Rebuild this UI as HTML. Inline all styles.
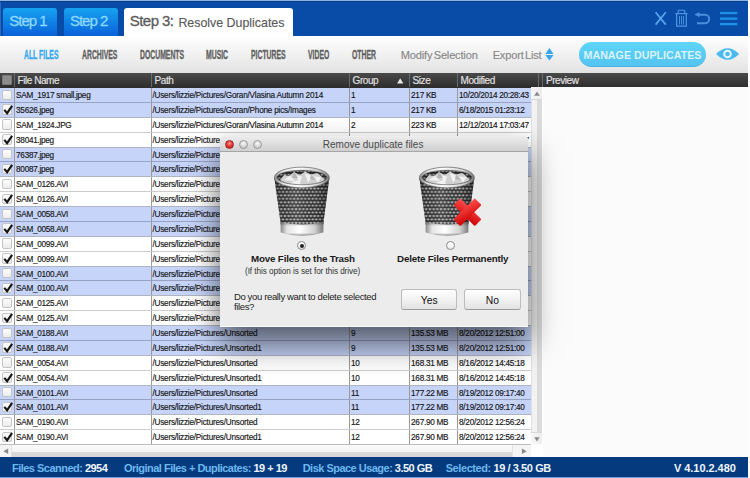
<!DOCTYPE html>
<html><head><meta charset="utf-8">
<style>
*{box-sizing:border-box;margin:0;padding:0}
html,body{width:750px;height:478px;overflow:hidden;background:#fff;font-family:"Liberation Sans",sans-serif;position:relative}
.abs{position:absolute}
#hdr{position:absolute;left:0;top:0;width:748.4px;height:35.6px;background:#084ca8;border-top:1px solid #8ab4e6;box-shadow:inset 1px 0 0 #2a68c0}
#hdr:after{content:"";position:absolute;left:0;right:0;top:0;height:1px;background:#0b3f88}
.tab{position:absolute;top:7px;height:27.6px;border-radius:3px 3px 0 0;background:linear-gradient(#16a2f0,#0a62da);color:#8cd8fe;font-size:15px;letter-spacing:-1.0px;white-space:nowrap}
.tab span{position:absolute;top:3.9px;-webkit-text-stroke:0.3px currentColor}
#tab3{background:#fff;color:#5a5a5a;letter-spacing:-0.55px}
#tbar{position:absolute;left:0;top:35.6px;width:748.4px;height:37.4px;background:linear-gradient(#ffffff,#f4f4f4 40%,#e2e2e2)}
.cat{position:absolute;top:48px;font-size:12px;font-weight:700;color:#606060;-webkit-text-stroke:0.35px currentColor;transform-origin:0 0;transform:scaleX(0.57);white-space:nowrap;line-height:14px}
.lnk{position:absolute;top:47.7px;font-size:11px;color:#878787;-webkit-text-stroke:0.15px #878787;white-space:nowrap;letter-spacing:-0.15px;word-spacing:-1.5px;line-height:14px}
#mng{position:absolute;left:579px;top:42.2px;width:127px;height:24.6px;border-radius:12.5px;background:linear-gradient(#60d4f8,#54c4f0);border-bottom:1px solid #4ab0e0;color:#d9f3fd;font-weight:700;font-size:10.7px;line-height:26px;text-align:center;white-space:nowrap}
#thead{position:absolute;left:0;top:73px;width:748.4px;height:14.3px;background:linear-gradient(#4a4a4a,#2e2e2e)}
.th{position:absolute;top:0;height:14.3px;border-left:1px solid #6a6a6a;color:#e2e2e2;-webkit-text-stroke:0.15px #e2e2e2;font-size:10px;line-height:15px;padding-left:2.6px;letter-spacing:-0.45px;white-space:nowrap}
#rows{position:absolute;left:0;top:0;width:531.7px;height:478px;overflow:hidden}
.r{position:absolute;left:0;width:531.7px;height:14.875px;border-top:1px solid #c6c6c6}
.r.b{background:#c6d4f9}
.r.w{background:#fff}
.c{position:absolute;top:0;height:100%;border-left:1px solid #9a9a9a;font-size:8.2px;line-height:16.4px;color:#151515;-webkit-text-stroke:0.15px #151515;white-space:nowrap;overflow:hidden;padding-left:1.1px;letter-spacing:-0.28px}
.c1{left:14px;width:137px}
.c2{left:151px;width:198px;letter-spacing:-0.21px;padding-left:0.4px}
.c3{left:349px;width:60px}
.c4{left:409px;width:48px}
.c5{left:457px;width:74.3px}
.cb{position:absolute;left:1.6px;top:1.6px;width:10px;height:10.4px;border:1px solid #c4c4c4;border-radius:2px;background:linear-gradient(#fdfdfd,#ececec)}
.ck{position:absolute;left:0;top:-1px}
#vscroll{position:absolute;left:531.7px;top:87.3px;width:11px;height:357px;background:#f0f0f0;border-left:1px solid #dcdcdc}
#hscroll{position:absolute;left:0;top:444.3px;width:531.7px;height:13px;background:linear-gradient(#f6f6f6,#e6e6e6);border-top:1px solid #c8c8c8}
#preview{position:absolute;left:542.5px;top:87.3px;width:206px;height:370px;background:#fbfbfb}
#foot{position:absolute;left:0;top:457.3px;width:748.4px;height:19.7px;background:#053b7e;font-size:11px;font-weight:700;letter-spacing:-0.52px;white-space:nowrap;line-height:20px}
#foot span{position:absolute;top:1px}
.tl{width:9px;height:9px;border-radius:50%;border:0.7px solid #9a9a9a;background:radial-gradient(circle at 50% 35%,#fafafa 0,#d8d8d8 50%,#bcbcbc 100%)}
.rad{width:9px;height:9px;border-radius:50%;border:1px solid #8a8a8a;background:linear-gradient(#fff,#eaeaea)}
.bt{font-size:9.8px;font-weight:700;color:#1a1a1a;white-space:nowrap;line-height:10px;letter-spacing:-0.2px}
.btn{width:56.3px;height:20.2px;border:1px solid #bcbcbc;border-bottom-color:#9c9c9c;border-radius:3px;background:linear-gradient(#ffffff,#f2f2f2 50%,#e2e2e2);font-size:10.3px;color:#111;text-align:center;line-height:22px}
.fl{color:#6cb8ee} .fv{color:#eef4fb}
</style></head><body>
<div id="hdr">
  <div class="tab" style="left:3.3px;width:54px"><span style="left:6px">Step 1</span></div>
  <div class="tab" style="left:63.9px;width:53.8px"><span style="left:6px">Step 2</span></div>
  <div class="tab" id="tab3" style="left:123.9px;width:168.9px"><span style="left:5.9px">Step 3:</span><span style="left:54.5px;font-size:12.4px;top:7.6px;letter-spacing:0px;-webkit-text-stroke:0.15px currentColor">Resolve Duplicates</span></div>
</div>
<div id="tbar"></div>
<div class="cat" style="left:24.3px;color:#36a8ee">ALL FILES</div>
<div class="cat" style="left:81.6px">ARCHIVES</div>
<div class="cat" style="left:139.6px">DOCUMENTS</div>
<div class="cat" style="left:205.9px">MUSIC</div>
<div class="cat" style="left:251.2px">PICTURES</div>
<div class="cat" style="left:308.1px">VIDEO</div>
<div class="cat" style="left:352px">OTHER</div>
<div class="lnk" style="left:400.8px">Modify Selection</div>
<div class="lnk" style="left:492.7px">Export List</div>
<div id="mng">MANAGE DUPLICATES</div>
<div id="thead">
  <div class="th" style="left:0;width:14.5px;border-left:none"><div style="position:absolute;left:1.6px;top:1.7px;width:10.4px;height:9.9px;background:#8c8c8c;border:1px solid #7a7a7a;border-radius:1px"></div></div>
  <div class="th" style="left:14px;width:137px">File Name</div>
  <div class="th" style="left:151px;width:198px">Path</div>
  <div class="th" style="left:349px;width:60px">Group</div>
  <div class="th" style="left:409px;width:48px">Size</div>
  <div class="th" style="left:457px;width:80.6px">Modified</div>
  <div class="th" style="left:537.6px;width:5px"></div>
  <div class="th" style="left:542.4px;width:206px">Preview</div>
</div>
<div id="rows">
<div class="r b" style="top:87.000px;border-top-color:#2e2e2e"><div class="cb"></div><div class="c c1">SAM_1917 small.jpeg</div><div class="c c2">/Users/lizzie/Pictures/Goran/Vlasina Autumn 2014</div><div class="c c3">1</div><div class="c c4">217 KB</div><div class="c c5">10/20/2014 20:28:43</div></div>
<div class="r b" style="top:101.875px;border-top-color:#98a3c4"><div class="cb"></div><svg class="ck" viewBox="0 0 14 15" width="14" height="15"><path d="M4.3 7.9 L7.1 11.2 L12.1 3.8" fill="none" stroke="#151515" stroke-width="2.1" stroke-linejoin="miter" stroke-linecap="butt"/></svg><div class="c c1">35626.jpeg</div><div class="c c2">/Users/lizzie/Pictures/Goran/Phone pics/Images</div><div class="c c3">1</div><div class="c c4">217 KB</div><div class="c c5">6/18/2015 01:23:12</div></div>
<div class="r w" style="top:116.750px;border-top-color:#b0b5c2"><div class="cb"></div><div class="c c1">SAM_1924.JPG</div><div class="c c2">/Users/lizzie/Pictures/Goran/Vlasina Autumn 2014</div><div class="c c3">2</div><div class="c c4">223 KB</div><div class="c c5">12/12/2014 17:03:47</div></div>
<div class="r w" style="top:131.625px;border-top-color:#cdcdcd"><div class="cb"></div><svg class="ck" viewBox="0 0 14 15" width="14" height="15"><path d="M4.3 7.9 L7.1 11.2 L12.1 3.8" fill="none" stroke="#151515" stroke-width="2.1" stroke-linejoin="miter" stroke-linecap="butt"/></svg><div class="c c1">38041.jpeg</div><div class="c c2">/Users/lizzie/Pictures/Goran/Vlasina Autumn 2014</div><div class="c c3">2</div><div class="c c4">223 KB</div><div class="c c5">12/12/2014 17:03:47</div></div>
<div class="r b" style="top:146.500px;border-top-color:#b0b5c2"><div class="cb"></div><div class="c c1">76387.jpeg</div><div class="c c2">/Users/lizzie/Pictures/Goran/Phone pics</div><div class="c c3">3</div><div class="c c4">1.02 MB</div><div class="c c5">6/18/2015 01:23:12</div></div>
<div class="r b" style="top:161.375px;border-top-color:#98a3c4"><div class="cb"></div><svg class="ck" viewBox="0 0 14 15" width="14" height="15"><path d="M4.3 7.9 L7.1 11.2 L12.1 3.8" fill="none" stroke="#151515" stroke-width="2.1" stroke-linejoin="miter" stroke-linecap="butt"/></svg><div class="c c1">80087.jpeg</div><div class="c c2">/Users/lizzie/Pictures/Goran/Phone pics</div><div class="c c3">3</div><div class="c c4">1.02 MB</div><div class="c c5">6/18/2015 01:23:12</div></div>
<div class="r w" style="top:176.250px;border-top-color:#b0b5c2"><div class="cb"></div><div class="c c1">SAM_0126.AVI</div><div class="c c2">/Users/lizzie/Pictures/Unsorted</div><div class="c c3">4</div><div class="c c4">35.10 MB</div><div class="c c5">8/20/2012 12:51:00</div></div>
<div class="r w" style="top:191.125px;border-top-color:#cdcdcd"><div class="cb"></div><svg class="ck" viewBox="0 0 14 15" width="14" height="15"><path d="M4.3 7.9 L7.1 11.2 L12.1 3.8" fill="none" stroke="#151515" stroke-width="2.1" stroke-linejoin="miter" stroke-linecap="butt"/></svg><div class="c c1">SAM_0126.AVI</div><div class="c c2">/Users/lizzie/Pictures/Unsorted1</div><div class="c c3">4</div><div class="c c4">35.10 MB</div><div class="c c5">8/20/2012 12:51:00</div></div>
<div class="r b" style="top:206.000px;border-top-color:#b0b5c2"><div class="cb"></div><div class="c c1">SAM_0058.AVI</div><div class="c c2">/Users/lizzie/Pictures/Unsorted</div><div class="c c3">5</div><div class="c c4">45.10 MB</div><div class="c c5">8/20/2012 12:51:00</div></div>
<div class="r b" style="top:220.875px;border-top-color:#98a3c4"><div class="cb"></div><svg class="ck" viewBox="0 0 14 15" width="14" height="15"><path d="M4.3 7.9 L7.1 11.2 L12.1 3.8" fill="none" stroke="#151515" stroke-width="2.1" stroke-linejoin="miter" stroke-linecap="butt"/></svg><div class="c c1">SAM_0058.AVI</div><div class="c c2">/Users/lizzie/Pictures/Unsorted1</div><div class="c c3">5</div><div class="c c4">45.10 MB</div><div class="c c5">8/20/2012 12:51:00</div></div>
<div class="r w" style="top:235.750px;border-top-color:#b0b5c2"><div class="cb"></div><div class="c c1">SAM_0099.AVI</div><div class="c c2">/Users/lizzie/Pictures/Unsorted</div><div class="c c3">6</div><div class="c c4">55.10 MB</div><div class="c c5">8/20/2012 12:51:00</div></div>
<div class="r w" style="top:250.625px;border-top-color:#cdcdcd"><div class="cb"></div><svg class="ck" viewBox="0 0 14 15" width="14" height="15"><path d="M4.3 7.9 L7.1 11.2 L12.1 3.8" fill="none" stroke="#151515" stroke-width="2.1" stroke-linejoin="miter" stroke-linecap="butt"/></svg><div class="c c1">SAM_0099.AVI</div><div class="c c2">/Users/lizzie/Pictures/Unsorted1</div><div class="c c3">6</div><div class="c c4">55.10 MB</div><div class="c c5">8/20/2012 12:51:00</div></div>
<div class="r b" style="top:265.500px;border-top-color:#b0b5c2"><div class="cb"></div><div class="c c1">SAM_0100.AVI</div><div class="c c2">/Users/lizzie/Pictures/Unsorted</div><div class="c c3">7</div><div class="c c4">65.10 MB</div><div class="c c5">8/20/2012 12:51:00</div></div>
<div class="r b" style="top:280.375px;border-top-color:#98a3c4"><div class="cb"></div><svg class="ck" viewBox="0 0 14 15" width="14" height="15"><path d="M4.3 7.9 L7.1 11.2 L12.1 3.8" fill="none" stroke="#151515" stroke-width="2.1" stroke-linejoin="miter" stroke-linecap="butt"/></svg><div class="c c1">SAM_0100.AVI</div><div class="c c2">/Users/lizzie/Pictures/Unsorted1</div><div class="c c3">7</div><div class="c c4">65.10 MB</div><div class="c c5">8/20/2012 12:51:00</div></div>
<div class="r w" style="top:295.250px;border-top-color:#b0b5c2"><div class="cb"></div><div class="c c1">SAM_0125.AVI</div><div class="c c2">/Users/lizzie/Pictures/Unsorted</div><div class="c c3">8</div><div class="c c4">75.10 MB</div><div class="c c5">8/20/2012 12:51:00</div></div>
<div class="r w" style="top:310.125px;border-top-color:#cdcdcd"><div class="cb"></div><svg class="ck" viewBox="0 0 14 15" width="14" height="15"><path d="M4.3 7.9 L7.1 11.2 L12.1 3.8" fill="none" stroke="#151515" stroke-width="2.1" stroke-linejoin="miter" stroke-linecap="butt"/></svg><div class="c c1">SAM_0125.AVI</div><div class="c c2">/Users/lizzie/Pictures/Unsorted1</div><div class="c c3">8</div><div class="c c4">75.10 MB</div><div class="c c5">8/20/2012 12:51:00</div></div>
<div class="r b" style="top:325.000px;border-top-color:#b0b5c2"><div class="cb"></div><div class="c c1">SAM_0188.AVI</div><div class="c c2">/Users/lizzie/Pictures/Unsorted</div><div class="c c3">9</div><div class="c c4">135.53 MB</div><div class="c c5">8/20/2012 12:51:00</div></div>
<div class="r b" style="top:339.875px;border-top-color:#98a3c4"><div class="cb"></div><svg class="ck" viewBox="0 0 14 15" width="14" height="15"><path d="M4.3 7.9 L7.1 11.2 L12.1 3.8" fill="none" stroke="#151515" stroke-width="2.1" stroke-linejoin="miter" stroke-linecap="butt"/></svg><div class="c c1">SAM_0188.AVI</div><div class="c c2">/Users/lizzie/Pictures/Unsorted1</div><div class="c c3">9</div><div class="c c4">135.53 MB</div><div class="c c5">8/20/2012 12:51:00</div></div>
<div class="r w" style="top:354.750px;border-top-color:#b0b5c2"><div class="cb"></div><div class="c c1">SAM_0054.AVI</div><div class="c c2">/Users/lizzie/Pictures/Unsorted</div><div class="c c3">10</div><div class="c c4">168.31 MB</div><div class="c c5">8/16/2012 14:45:18</div></div>
<div class="r w" style="top:369.625px;border-top-color:#cdcdcd"><div class="cb"></div><svg class="ck" viewBox="0 0 14 15" width="14" height="15"><path d="M4.3 7.9 L7.1 11.2 L12.1 3.8" fill="none" stroke="#151515" stroke-width="2.1" stroke-linejoin="miter" stroke-linecap="butt"/></svg><div class="c c1">SAM_0054.AVI</div><div class="c c2">/Users/lizzie/Pictures/Unsorted1</div><div class="c c3">10</div><div class="c c4">168.31 MB</div><div class="c c5">8/16/2012 14:45:18</div></div>
<div class="r b" style="top:384.500px;border-top-color:#b0b5c2"><div class="cb"></div><div class="c c1">SAM_0101.AVI</div><div class="c c2">/Users/lizzie/Pictures/Unsorted</div><div class="c c3">11</div><div class="c c4">177.22 MB</div><div class="c c5">8/19/2012 09:17:40</div></div>
<div class="r b" style="top:399.375px;border-top-color:#98a3c4"><div class="cb"></div><svg class="ck" viewBox="0 0 14 15" width="14" height="15"><path d="M4.3 7.9 L7.1 11.2 L12.1 3.8" fill="none" stroke="#151515" stroke-width="2.1" stroke-linejoin="miter" stroke-linecap="butt"/></svg><div class="c c1">SAM_0101.AVI</div><div class="c c2">/Users/lizzie/Pictures/Unsorted1</div><div class="c c3">11</div><div class="c c4">177.22 MB</div><div class="c c5">8/19/2012 09:17:40</div></div>
<div class="r w" style="top:414.250px;border-top-color:#b0b5c2"><div class="cb"></div><div class="c c1">SAM_0190.AVI</div><div class="c c2">/Users/lizzie/Pictures/Unsorted</div><div class="c c3">12</div><div class="c c4">267.90 MB</div><div class="c c5">8/20/2012 12:56:24</div></div>
<div class="r w" style="top:429.125px;border-top-color:#cdcdcd"><div class="cb"></div><svg class="ck" viewBox="0 0 14 15" width="14" height="15"><path d="M4.3 7.9 L7.1 11.2 L12.1 3.8" fill="none" stroke="#151515" stroke-width="2.1" stroke-linejoin="miter" stroke-linecap="butt"/></svg><div class="c c1">SAM_0190.AVI</div><div class="c c2">/Users/lizzie/Pictures/Unsorted1</div><div class="c c3">12</div><div class="c c4">267.90 MB</div><div class="c c5">8/20/2012 12:56:24</div></div>
</div>
<div id="preview"></div>
<div class="abs" style="left:0;top:477px;width:748.4px;height:1px;background:#6f9edb"></div>
<div id="foot">
 <span style="left:12px"><span class="fl" style="position:static">Files Scanned:</span> <span class="fv" style="position:static">2954</span></span>
 <span style="left:124px"><span class="fl" style="position:static">Original Files + Duplicates:</span> <span class="fv" style="position:static">19 + 19</span></span>
 <span style="left:302.7px"><span class="fl" style="position:static">Disk Space Usage:</span> <span class="fv" style="position:static">3.50 GB</span></span>
 <span style="left:445.7px;letter-spacing:-0.42px"><span class="fl" style="position:static">Selected:</span> <span class="fv" style="position:static">19 / 3.50 GB</span></span>
 <span style="left:674px;letter-spacing:-0.05px" class="fv">V 4.10.2.480</span>
</div>

<svg class="abs" style="left:650px;top:6px" width="95" height="26" viewBox="650 6 95 26">
  <path d="M655.6 12.2 L665.8 24.6 M665.8 12.2 L655.6 24.6" stroke="#5aa6ec" stroke-width="1.7" fill="none"/>
  <path d="M678.2 13.2 L678.2 10.8 Q678.2 10.3 678.8 10.3 L684.2 10.3 Q684.8 10.3 684.8 10.8 L684.8 13.2" stroke="#4e98e2" stroke-width="1.1" fill="none"/>
  <path d="M675.3 13.6 L687.5 13.6" stroke="#4e98e2" stroke-width="1.2"/>
  <path d="M676.6 14 L676.6 26.2 L686.3 26.2 L686.3 14" stroke="#4e98e2" stroke-width="1.2" fill="none"/>
  <path d="M679.5 16 L679.5 24.5 M681.5 16 L681.5 24.5 M683.5 16 L683.5 24.5" stroke="#4e98e2" stroke-width="0.9"/>
  <path d="M694.4 14.6 L699.4 11.9 L699.4 17.3 Z" fill="#4a8edb"/>
  <path d="M699 14.7 L704.9 14.7 A4.3 4.3 0 0 1 704.9 23.3 L697 23.3" stroke="#4a8edb" stroke-width="2" fill="none"/>
  <rect x="720" y="11.9" width="17.3" height="2.3" fill="#1e90e8"/>
  <rect x="720" y="17.5" width="17.3" height="2.3" fill="#1e90e8"/>
  <rect x="720" y="23" width="17.3" height="2.3" fill="#1e90e8"/>
</svg>
<svg class="abs" style="left:540px;top:44px" width="20" height="20" viewBox="540 44 20 20">
  <path d="M549.4 48 L553.6 54 L545.3 54 Z" fill="#3aa6ea"/>
  <path d="M545.3 55.1 L553.6 55.1 L549.4 60.5 Z" fill="#3aa6ea"/>
</svg>
<svg class="abs" style="left:712px;top:44px" width="32" height="22" viewBox="712 44 32 22">
  <path d="M716 54 Q727.5 42.5 739.2 54 Q727.5 65.5 716 54 Z" fill="#4cbaf0"/>
  <circle cx="727.5" cy="54" r="3.3" fill="none" stroke="#e6f8ff" stroke-width="2"/>
</svg>
<svg class="abs" style="left:395px;top:76px" width="10" height="10" viewBox="395 76 10 10">
  <path d="M400.2 78.2 L403.3 83.5 L397.1 83.5 Z" fill="#e8e8e8"/>
</svg>
<div class="abs" style="left:531.3px;top:87.3px;width:11px;height:357px;background:linear-gradient(90deg,#f2f2f2 0,#f2f2f2 52%,#dadada 52%,#dcdcdc 100%);border-left:1px solid #e0e0e0"></div>
<div class="abs" style="left:531.3px;top:87.3px;width:11px;height:12.3px;background:linear-gradient(90deg,#f6f6f6,#ececec);border-bottom:1px solid #d8d8d8"></div>
<div class="abs" style="left:531.3px;top:431.5px;width:11px;height:12.8px;background:linear-gradient(90deg,#f6f6f6,#ececec);border-top:1px solid #d8d8d8"></div>
<svg class="abs" style="left:531px;top:87px" width="12" height="358" viewBox="531 87 12 358">
  <path d="M537 91.6 L539.9 95.7 L534.1 95.7 Z" fill="#8a8a8a"/>
  <path d="M534.2 437.2 L539.6 437.2 L536.9 441.4 Z" fill="#8a8a8a"/>
</svg>
<div class="abs" style="left:0;top:444.3px;width:531.3px;height:12.7px;background:linear-gradient(#fbfbfb 0,#f3f3f3 55%,#d9d9d9 56%,#d6d6d6 100%);border-top:1px solid #bdbdbd"></div>
<div class="abs" style="left:0;top:445.3px;width:12px;height:11.7px;background:#f4f4f4;border-right:1px solid #e2e2e2"></div>
<div class="abs" style="left:512px;top:445.3px;width:19.3px;height:11.7px;background:#f4f4f4;border-left:1px solid #e2e2e2"></div>
<div class="abs" style="left:531.3px;top:444.3px;width:11px;height:12.7px;background:#fff"></div>
<svg class="abs" style="left:0;top:444px" width="532" height="13" viewBox="0 444 532 13">
  <path d="M3.3 451.2 L8.2 448.5 L8.2 453.9 Z" fill="#8a8a8a"/>
  <path d="M526.8 451.2 L521.9 448.5 L521.9 453.9 Z" fill="#8a8a8a"/>
</svg>


<div id="dshadow" class="abs" style="left:219.5px;top:136.2px;width:308.8px;height:190.5px;box-shadow:0 16px 30px 0px rgba(0,0,0,0.6)"></div>
<div id="dlg" class="abs" style="left:219.5px;top:136.2px;width:308.8px;height:190.5px;background:#ececec;border-radius:4px 4px 0 0;border-bottom:1px solid #fafafa">
  <div class="abs" style="left:0;top:0;width:308.8px;height:15.4px;background:linear-gradient(#ededed,#d0d0d0);border-bottom:1px solid #a6a6a6;border-radius:4px 4px 0 0"></div>
 <div class="abs" style="left:0;top:0.5px;width:100%;height:100%">
  <div class="abs tl" style="left:5.5px;top:3.3px;background:radial-gradient(circle at 50% 35%,#ff9a9a 0,#ee3838 45%,#b01010 100%);border-color:#9a2a2a"></div>
  <div class="abs tl" style="left:19.4px;top:3.3px"></div>
  <div class="abs tl" style="left:33.5px;top:3.3px"></div>
  <div class="abs" style="left:103.3px;top:2.2px;font-size:10px;color:#4a4a4a;white-space:nowrap;line-height:12px">Remove duplicate files</div>
  <svg class="abs" style="left:52px;top:29px" width="70" height="74" viewBox="0 0 70 74">
  <defs>
    <pattern id="mpa" width="3.7" height="6.9" patternUnits="userSpaceOnUse">
      <rect width="3.7" height="6.9" fill="#262626"/>
      <ellipse cx="1.85" cy="1.72" rx="1.5" ry="1.1" fill="#cccccc"/>
      <ellipse cx="0" cy="5.17" rx="1.5" ry="1.1" fill="#bdbdbd"/>
      <ellipse cx="3.7" cy="5.17" rx="1.5" ry="1.1" fill="#bdbdbd"/>
    </pattern>
    <linearGradient id="sha" x1="0" x2="1" y1="0" y2="0">
      <stop offset="0" stop-color="#000" stop-opacity="0.4"/>
      <stop offset="0.12" stop-color="#000" stop-opacity="0.05"/>
      <stop offset="0.4" stop-color="#fff" stop-opacity="0.1"/>
      <stop offset="0.75" stop-color="#000" stop-opacity="0.0"/>
      <stop offset="1" stop-color="#000" stop-opacity="0.45"/>
    </linearGradient>
    <linearGradient id="sva" x1="0" x2="1" y1="0" y2="0">
      <stop offset="0" stop-color="#8a8a8a"/>
      <stop offset="0.15" stop-color="#e4e4e4"/>
      <stop offset="0.45" stop-color="#ffffff"/>
      <stop offset="0.8" stop-color="#d0d0d0"/>
      <stop offset="1" stop-color="#7a7a7a"/>
    </linearGradient>
    <linearGradient id="bva" x1="0" x2="0" y1="0" y2="1">
      <stop offset="0" stop-color="#000" stop-opacity="0.35"/>
      <stop offset="0.3" stop-color="#000" stop-opacity="0"/>
      <stop offset="0.8" stop-color="#000" stop-opacity="0"/>
      <stop offset="1" stop-color="#000" stop-opacity="0.45"/>
    </linearGradient>
    <linearGradient id="rga" x1="0" x2="1" y1="0" y2="1">
      <stop offset="0" stop-color="#ff5050"/>
      <stop offset="1" stop-color="#cc0000"/>
    </linearGradient>
  </defs>
  <path d="M2.4 12 L57.3 12 L51.3 58 Q30 63 8.7 58 Z" fill="url(#mpa)"/>
  <path d="M2.4 12 L57.3 12 L51.3 58 Q30 63 8.7 58 Z" fill="url(#sha)"/>
  <ellipse cx="29.85" cy="11.65" rx="25.4" ry="7.3" fill="url(#mpa)"/>
  <ellipse cx="29.85" cy="11.65" rx="25.4" ry="7.3" fill="#000" fill-opacity="0.25"/>
  <path d="M8 14 L12 9 L17 10 L22 6 L28 9 L33 5.5 L39 8.5 L45 7 L49 10 L53 14 Q45 19.5 30 19.5 Q15 19.5 8 14 Z" fill="#d0d0d0"/>
  <path d="M12 14 L18 9.5 L23 15 Z M23 9 L30 10.5 L28 17 Z M33 7.5 L41 10 L36 16.5 Z M42 10.5 L49 11 L46 17 Z M18 17 L26 14 L30 19 Z" fill="#f2f2f2"/>
  <path d="M22 6 L26 12 L20 12 Z M39 8.5 L44 14 L38 13 Z" fill="#b4b4b4"/>
  <path fill-rule="evenodd" d="M2.3 11.45 A27.55 10.45 0 1 0 57.4 11.45 A27.55 10.45 0 1 0 2.3 11.45 Z M5 11.3 A24.85 7.2 0 1 0 54.7 11.3 A24.85 7.2 0 1 0 5 11.3 Z" fill="url(#sva)"/>
  <ellipse cx="29.85" cy="11.45" rx="27.4" ry="10.3" fill="none" stroke="#5e5e5e" stroke-width="0.7"/>
  <ellipse cx="29.85" cy="11.5" rx="25" ry="7.25" fill="none" stroke="#4a4a4a" stroke-width="0.6"/>
  <path d="M8.5 56 Q30 61 51.5 56 L51.3 66.5 Q30 73 8.7 66.5 Z" fill="url(#sva)"/>
  <path d="M8.5 56 Q30 61 51.5 56 L51.3 66.5 Q30 73 8.7 66.5 Z" fill="url(#bva)"/>
  
</svg>
  <svg class="abs" style="left:197.85px;top:29px" width="70" height="74" viewBox="0 0 70 74">
  <defs>
    <pattern id="mpb" width="3.7" height="6.9" patternUnits="userSpaceOnUse">
      <rect width="3.7" height="6.9" fill="#262626"/>
      <ellipse cx="1.85" cy="1.72" rx="1.5" ry="1.1" fill="#cccccc"/>
      <ellipse cx="0" cy="5.17" rx="1.5" ry="1.1" fill="#bdbdbd"/>
      <ellipse cx="3.7" cy="5.17" rx="1.5" ry="1.1" fill="#bdbdbd"/>
    </pattern>
    <linearGradient id="shb" x1="0" x2="1" y1="0" y2="0">
      <stop offset="0" stop-color="#000" stop-opacity="0.4"/>
      <stop offset="0.12" stop-color="#000" stop-opacity="0.05"/>
      <stop offset="0.4" stop-color="#fff" stop-opacity="0.1"/>
      <stop offset="0.75" stop-color="#000" stop-opacity="0.0"/>
      <stop offset="1" stop-color="#000" stop-opacity="0.45"/>
    </linearGradient>
    <linearGradient id="svb" x1="0" x2="1" y1="0" y2="0">
      <stop offset="0" stop-color="#8a8a8a"/>
      <stop offset="0.15" stop-color="#e4e4e4"/>
      <stop offset="0.45" stop-color="#ffffff"/>
      <stop offset="0.8" stop-color="#d0d0d0"/>
      <stop offset="1" stop-color="#7a7a7a"/>
    </linearGradient>
    <linearGradient id="bvb" x1="0" x2="0" y1="0" y2="1">
      <stop offset="0" stop-color="#000" stop-opacity="0.35"/>
      <stop offset="0.3" stop-color="#000" stop-opacity="0"/>
      <stop offset="0.8" stop-color="#000" stop-opacity="0"/>
      <stop offset="1" stop-color="#000" stop-opacity="0.45"/>
    </linearGradient>
    <linearGradient id="rgb" x1="0" x2="1" y1="0" y2="1">
      <stop offset="0" stop-color="#ff5050"/>
      <stop offset="1" stop-color="#cc0000"/>
    </linearGradient>
  </defs>
  <path d="M2.4 12 L57.3 12 L51.3 58 Q30 63 8.7 58 Z" fill="url(#mpb)"/>
  <path d="M2.4 12 L57.3 12 L51.3 58 Q30 63 8.7 58 Z" fill="url(#shb)"/>
  <ellipse cx="29.85" cy="11.65" rx="25.4" ry="7.3" fill="url(#mpb)"/>
  <ellipse cx="29.85" cy="11.65" rx="25.4" ry="7.3" fill="#000" fill-opacity="0.25"/>
  <path d="M8 14 L12 9 L17 10 L22 6 L28 9 L33 5.5 L39 8.5 L45 7 L49 10 L53 14 Q45 19.5 30 19.5 Q15 19.5 8 14 Z" fill="#d0d0d0"/>
  <path d="M12 14 L18 9.5 L23 15 Z M23 9 L30 10.5 L28 17 Z M33 7.5 L41 10 L36 16.5 Z M42 10.5 L49 11 L46 17 Z M18 17 L26 14 L30 19 Z" fill="#f2f2f2"/>
  <path d="M22 6 L26 12 L20 12 Z M39 8.5 L44 14 L38 13 Z" fill="#b4b4b4"/>
  <path fill-rule="evenodd" d="M2.3 11.45 A27.55 10.45 0 1 0 57.4 11.45 A27.55 10.45 0 1 0 2.3 11.45 Z M5 11.3 A24.85 7.2 0 1 0 54.7 11.3 A24.85 7.2 0 1 0 5 11.3 Z" fill="url(#svb)"/>
  <ellipse cx="29.85" cy="11.45" rx="27.4" ry="10.3" fill="none" stroke="#5e5e5e" stroke-width="0.7"/>
  <ellipse cx="29.85" cy="11.5" rx="25" ry="7.25" fill="none" stroke="#4a4a4a" stroke-width="0.6"/>
  <path d="M8.5 56 Q30 61 51.5 56 L51.3 66.5 Q30 73 8.7 66.5 Z" fill="url(#svb)"/>
  <path d="M8.5 56 Q30 61 51.5 56 L51.3 66.5 Q30 73 8.7 66.5 Z" fill="url(#bvb)"/>
  
  <g transform="translate(50.5,46.2) rotate(45)">
    <rect x="-15" y="-4.8" width="30" height="9.6" rx="1" fill="url(#rgb)"/>
    <rect x="-4.8" y="-15" width="9.6" height="30" rx="1" fill="url(#rgb)"/>
  </g>
</svg>
  <div class="abs rad" style="left:77.3px;top:104px"><div style="position:absolute;left:2.4px;top:2.4px;width:4.2px;height:4.2px;border-radius:50%;background:#222"></div></div>
  <div class="abs rad" style="left:226.4px;top:104.5px"></div>
  <div class="abs bt" style="left:31.6px;top:117.3px">Move Files to the Trash</div>
  <div class="abs bt" style="left:177.6px;top:117.3px">Delete Files Permanently</div>
  <div class="abs" style="left:25.5px;top:130.5px;font-size:8.2px;color:#333;white-space:nowrap;line-height:10px;letter-spacing:-0.07px">(If this option is set for this drive)</div>
  <div class="abs" style="left:14.4px;top:155px;font-size:9.5px;color:#222;white-space:nowrap;line-height:10.6px;letter-spacing:-0.35px">Do you really want to delete selected<br>files?</div>
  <div class="abs btn" style="left:181.5px;top:152.8px">Yes</div>
  <div class="abs btn" style="left:244.8px;top:152.8px">No</div>
 </div>
</div>

</body></html>
